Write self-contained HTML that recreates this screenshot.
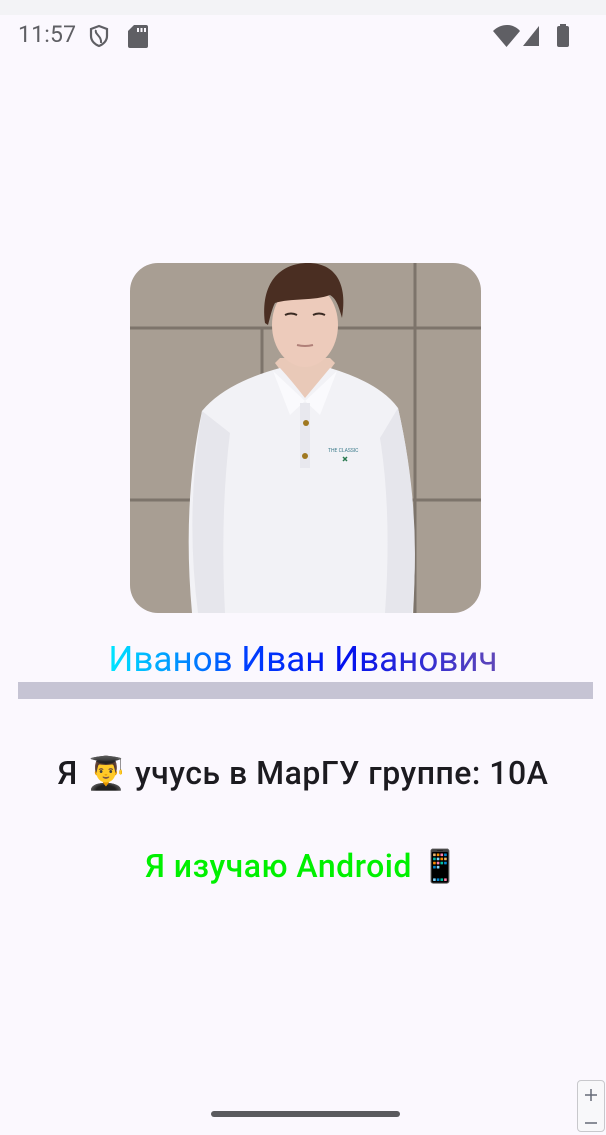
<!DOCTYPE html>
<html><head><meta charset="utf-8"><style>
html,body{margin:0;padding:0}
body{width:606px;height:1122px;background:#fbf8fe;position:relative;overflow:hidden;font-family:"Roboto","Liberation Sans","DejaVu Sans",sans-serif}
.top{position:absolute;left:0;top:0;width:606px;height:15px;background:#f3f3f6}
.time{position:absolute;left:18px;top:21px;font-size:23px;color:#5f5f64;letter-spacing:0.2px}
.photo{position:absolute;left:130px;top:263px;width:351px;height:350px;border-radius:28px;overflow:hidden}
.name{position:absolute;left:0;width:606px;top:638px;text-align:center;font-size:35px;line-height:44px}
.name span{background:linear-gradient(90deg,#00e8ff 0%,#0040ff 35%,#0010f0 60%,#6048b8 100%);-webkit-background-clip:text;background-clip:text;color:transparent}
.bar{position:absolute;left:18px;top:682px;width:575px;height:17px;background:#c6c4d4}
.l2{position:absolute;left:0;width:606px;top:753px;text-align:center;font-size:32px;color:#1c1b20;font-weight:500;line-height:40px;letter-spacing:0.5px}
.l3{position:absolute;left:0;width:606px;top:846px;text-align:center;font-size:32px;color:#00f000;font-weight:500;line-height:40px;letter-spacing:0.5px}
.home{position:absolute;left:211px;top:1111px;width:189px;height:6px;border-radius:3px;background:#5a5a5e}
.zoom{position:absolute;left:577px;top:1080px;width:26px;height:50px;border:1px solid #c8c8cc;border-radius:4px;background:#f8f8fa}
</style></head><body>
<div class="top"></div>
<div class="time">11:57</div>
<svg style="position:absolute;left:88px;top:24px" width="22" height="24" viewBox="0 0 22 24"><path d="M11 2 L19 5 V12 C19 17 15 20.5 11 22 C7 20.5 3 17 3 12 V5 Z" fill="none" stroke="#5f5f64" stroke-width="2.2"/><path d="M8 6 C6 10 14 12 13 19" fill="none" stroke="#5f5f64" stroke-width="2"/></svg>
<svg style="position:absolute;left:128px;top:25px" width="20" height="23" viewBox="0 0 20 23"><path d="M6 0 H18 a2 2 0 0 1 2 2 V21 a2 2 0 0 1-2 2 H2 a2 2 0 0 1-2-2 V6 Z" fill="#5f5f64"/><rect x="9" y="3" width="2" height="4" fill="#fbf8fe"/><rect x="12.5" y="3" width="2" height="4" fill="#fbf8fe"/><rect x="16" y="3" width="2" height="4" fill="#fbf8fe"/></svg>
<svg style="position:absolute;left:493px;top:24px" width="90" height="24" viewBox="0 0 90 24"><path d="M0 7 C8 -1 20 -1 27 7 L13.5 23 Z" fill="#5f5f64"/><path d="M30 22 L46 2 V22 Z" fill="#5f5f64"/><rect x="64" y="2" width="12" height="21" rx="2" fill="#5f5f64"/><rect x="67" y="0" width="6" height="3" fill="#5f5f64"/></svg>
<div class="photo"><svg width="351" height="350" viewBox="0 0 351 350">
<rect width="351" height="350" fill="#a89e93"/>
<g stroke="#7d746b" stroke-width="3"><line x1="0" y1="65" x2="351" y2="65"/><line x1="0" y1="237" x2="351" y2="237"/><line x1="285" y1="0" x2="285" y2="350"/><line x1="132" y1="65" x2="132" y2="237"/></g>
<path d="M150 95 L145 100 L175 140 L205 100 L200 95 Z" fill="#e9c9b8"/>
<path d="M150 105 Q162 118 175 135 L200 105 Q250 120 268 145 Q290 240 283 350 L62 350 Q52 240 72 148 Q95 120 150 105 Z" fill="#f2f2f6"/>
<path d="M72 148 Q55 250 68 350 L95 350 Q90 250 100 170 Z" fill="#e6e6ec"/>
<path d="M268 145 Q292 250 282 350 L255 350 Q262 250 250 175 Z" fill="#e6e6ec"/>
<path d="M143 108 L175 138 L160 152 Z M207 108 L175 138 L190 152 Z" fill="#fafafd"/>
<rect x="170" y="140" width="10" height="65" fill="#e8e8ee"/>
<circle cx="176" cy="160" r="3" fill="#a07820"/><circle cx="175" cy="193" r="3" fill="#a07820"/>
<text x="198" y="189" font-size="5" fill="#3a7a8a">THE CLASSIC</text>
<path d="M213 194 l4 4 m0 -4 l-4 4" stroke="#2a7a50" stroke-width="1.5"/>
<ellipse cx="175" cy="62" rx="33" ry="42" fill="#edcbbb"/>
<path d="M135 60 C130 20 150 0 178 0 C205 0 218 20 212 55 C208 40 205 35 200 32 C185 38 160 35 145 40 C142 45 140 55 138 62 Z" fill="#4a2e22"/>
<path d="M155 52 q6 -3 12 0 M183 52 q6 -3 12 0" stroke="#3a2a22" stroke-width="2" fill="none"/>
<path d="M167 82 q8 2 16 0" stroke="#b08078" stroke-width="2" fill="none"/>
</svg></div>
<div class="name"><span>Иванов Иван Иванович</span></div>
<div class="bar"></div>
<div class="l2">Я <span style="font-family:'Noto Color Emoji',sans-serif">👨‍🎓</span> учусь в МарГУ группе: 10А</div>
<div class="l3">Я изучаю Android <span style="font-family:'Noto Color Emoji',sans-serif;font-weight:400">📱</span></div>
<div class="home"></div>
<div class="zoom"><svg width="26" height="50"><path d="M7 14 H19 M13 8 V20 M7 42 H19" stroke="#666a78" stroke-width="1.5"/></svg></div>
</body></html>
